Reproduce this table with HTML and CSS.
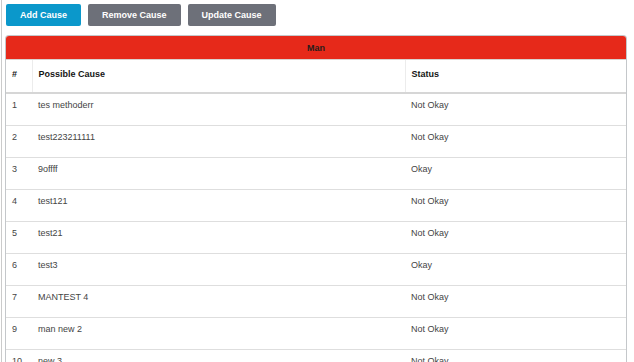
FILE: index.html
```html
<!DOCTYPE html>
<html lang="en">
<head>
    <meta charset="UTF-8">
    <meta name="viewport" content="width=device-width, initial-scale=1.0">
    <title>Possible Causes</title>
    <link rel="stylesheet" href="styles.css">
</head>
<body>
    <div class="page">
        <div class="toolbar">
            <button class="btn btn-primary">Add Cause</button>
            <button class="btn btn-secondary">Remove Cause</button>
            <button class="btn btn-secondary">Update Cause</button>
        </div>

        <div class="card">
            <div class="card-title">Man</div>
            <table class="cause-table">
                <thead>
                    <tr>
                        <th class="col-num">#</th>
                        <th class="col-cause">Possible Cause</th>
                        <th class="col-status">Status</th>
                    </tr>
                </thead>
                <tbody>
                    <tr><td>1</td><td>tes methoderr</td><td>Not Okay</td></tr>
                    <tr><td>2</td><td>test223211111</td><td>Not Okay</td></tr>
                    <tr><td>3</td><td>9offff</td><td>Okay</td></tr>
                    <tr><td>4</td><td>test121</td><td>Not Okay</td></tr>
                    <tr><td>5</td><td>test21</td><td>Not Okay</td></tr>
                    <tr><td>6</td><td>test3</td><td>Okay</td></tr>
                    <tr><td>7</td><td>MANTEST 4</td><td>Not Okay</td></tr>
                    <tr><td>9</td><td>man new 2</td><td>Not Okay</td></tr>
                    <tr><td>10</td><td>new 3</td><td>Not Okay</td></tr>
                </tbody>
            </table>
        </div>
    </div>
</body>
</html>
```

FILE: styles.css
```css
* { box-sizing: border-box; margin: 0; padding: 0; }
html, body {
    height: 100%;
    overflow: hidden;
}
body {
    font-family: "Liberation Sans", Arial, sans-serif;
    font-size: 9px;
    color: #444;
    background: #fff;
}
.page {
    margin-left: 1px;
    border-left: 1px solid #cbcbcb;
    min-height: 100%;
    padding: 4px 7px 0 3px;
}
.toolbar {
    display: flex;
    gap: 7px;
    margin-left: 1px;
    margin-bottom: 9px;
}
.btn {
    height: 22px;
    padding: 0 14px;
    border: none;
    border-radius: 2px;
    font-family: inherit;
    font-size: 9px;
    font-weight: bold;
    line-height: 22px;
    color: #fff;
    cursor: pointer;
}
.btn-primary {
    background: #0b98cb;
}
.btn-secondary {
    background: #6d7079;
}
.card {
    border: 1px solid #c4c7ca;
    border-bottom: none;
    border-radius: 4px 4px 0 0;
    overflow: hidden;
}
.card-title {
    height: 24px;
    line-height: 24px;
    background: #e6291a;
    color: #2a1d1b;
    font-weight: bold;
    text-align: center;
    border-bottom: 1px solid #d9d2d0;
}
.cause-table {
    width: 100%;
    border-collapse: collapse;
    table-layout: fixed;
}
.cause-table th {
    height: 33px;
    padding: 8px 6px 0;
    line-height: 13px;
    text-align: left;
    vertical-align: top;
    color: #151515;
    font-weight: bold;
    border-right: 1px solid #ececec;
    border-bottom: 2px solid #d6d6d6;
}
.cause-table th:last-child {
    border-right: none;
}
.col-num { width: 26px; }
.col-cause { width: 373px; }
.cause-table td {
    height: 32px;
    padding: 5px 6px 0;
    line-height: 13px;
    vertical-align: top;
    border-bottom: 1px solid #dedede;
}
```
